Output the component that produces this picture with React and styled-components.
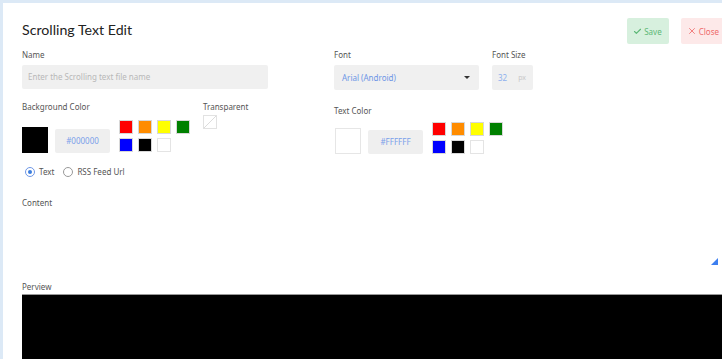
import styled, { createGlobalStyle } from "styled-components";
import { Check, X } from "lucide-react";

const GlobalStyle = createGlobalStyle`
  html, body {
    margin: 0;
    padding: 0;
    background: #fff;
    font-family: "Noto Sans", "Open Sans", sans-serif;
    color: #333;
  }
`;

const Page = styled.div`
  width: 719px;
  height: 356px;
  overflow: hidden;
  border-top: 3px solid #dce9f6;
  border-left: 3px solid #dce9f6;
  padding: 0 0 0 19px;
  box-sizing: content-box;
`;

const Header = styled.div`
  display: flex;
  justify-content: space-between;
  align-items: flex-start;
  height: 46px;
  margin-right: 15px;
`;

const Title = styled.h1`
  margin: 17px 0 0;
  font-family: "Lato", "Noto Sans", sans-serif;
  font-size: 14.2px;
  font-weight: 400;
  line-height: 20px;
  color: #222;
`;

const Actions = styled.div`
  display: flex;
  gap: 12px;
  margin-top: 15px;
`;

const ActionButton = styled.button`
  display: flex;
  align-items: center;
  gap: 2px;
  height: 26px;
  padding: 0 7px 0 6px;
  border: none;
  border-radius: 2px;
  font-family: inherit;
  font-size: 8px;
  background: ${(p) => (p.$kind === "save" ? "#d7f0de" : "#fde9e9")};
  color: ${(p) => (p.$kind === "save" ? "#5cb876" : "#ef6b6b")};
`;

const Grid = styled.div`
  display: grid;
  grid-template-columns: 312px 1fr;
`;

const Column = styled.div`
  display: flex;
  flex-direction: column;
`;

const Label = styled.div`
  font-size: 8px;
  line-height: 12px;
  color: #555;
  margin-top: ${(p) => p.$mt ?? 0}px;
  margin-bottom: ${(p) => p.$mb ?? 4}px;
`;

const TextInput = styled.div`
  width: 246px;
  height: 24px;
  background: #f0f0f0;
  border-radius: 2px;
  font-size: 8px;
  line-height: 24px;
  padding-left: 6px;
  box-sizing: border-box;
  color: #b8b8b8;
`;

const FontRow = styled.div`
  display: flex;
  gap: 13px;
`;

const Field = styled.div`
  display: flex;
  flex-direction: column;
`;

const Select = styled.div`
  position: relative;
  width: 145px;
  height: 25px;
  background: #f0f0f0;
  border-radius: 2px;
  font-size: 8px;
  line-height: 25px;
  padding-left: 8px;
  box-sizing: border-box;
  color: #6d96e6;
  &::after {
    content: "";
    position: absolute;
    right: 9px;
    top: 11px;
    border-left: 3px solid transparent;
    border-right: 3px solid transparent;
    border-top: 3px solid #333;
  }
`;

const SizeInput = styled.div`
  display: flex;
  align-items: center;
  gap: 11px;
  width: 41px;
  height: 25px;
  background: #f0f0f0;
  border-radius: 2px;
  font-size: 8px;
  padding-left: 6px;
  box-sizing: border-box;
  color: #8fb0ee;
`;

const Unit = styled.span`
  color: #c8c8c8;
  font-size: 7px;
`;

const ColorRow = styled.div`
  display: flex;
  align-items: flex-end;
  margin-top: ${(p) => p.$mt}px;
`;

const BigSwatch = styled.div`
  width: 26px;
  height: 26px;
  background: ${(p) => p.$color};
  border: 1px solid ${(p) => (p.$color === "#ffffff" ? "#e6e6e6" : p.$color)};
  box-sizing: border-box;
  margin: 0 7px ${(p) => p.$mb}px ${(p) => p.$ml}px;
`;

const HexInput = styled.div`
  width: 55px;
  height: 24px;
  background: #efefef;
  border-radius: 2px;
  font-size: 8px;
  line-height: 24px;
  text-align: center;
  color: #7aa0ea;
  margin: 0 9px ${(p) => p.$mb}px 0;
`;

const Palette = styled.div`
  display: grid;
  grid-template-columns: repeat(4, 14px);
  grid-auto-rows: 14px;
  gap: 4px 5px;
`;

const Chip = styled.div`
  background: ${(p) => p.$color};
  border: 1px solid ${(p) => (p.$color === "#ffffff" ? "#e4e4e4" : "#d8d8d8")};
  box-sizing: border-box;
`;

const Transparent = styled.div`
  display: flex;
  flex-direction: column;
  margin-left: 13px;
  align-self: flex-start;
  margin-top: -19px;
`;

const NoneBox = styled.svg`
  display: block;
  margin-top: 2px;
`;

const RadioRow = styled.div`
  display: flex;
  align-items: center;
  gap: 9px;
  margin: 14px 0 0 3px;
  font-size: 8px;
  color: #555;
`;

const RadioOption = styled.label`
  display: flex;
  align-items: center;
  gap: 4px;
`;

const RadioDot = styled.span`
  width: 10px;
  height: 10px;
  border-radius: 50%;
  border: 1px solid ${(p) => (p.$on ? "#6d96e6" : "#999")};
  box-sizing: border-box;
  display: flex;
  align-items: center;
  justify-content: center;
  &::after {
    content: "";
    width: 4px;
    height: 4px;
    border-radius: 50%;
    background: ${(p) => (p.$on ? "#3b7ddd" : "transparent")};
  }
`;

const ContentArea = styled.div`
  position: relative;
  height: 62px;
  margin-top: 10px;
`;

const Corner = styled.div`
  position: absolute;
  right: 23px;
  bottom: 16px;
  width: 0;
  height: 0;
  border-left: 7px solid transparent;
  border-bottom: 7px solid #3d7ff0;
`;

const Preview = styled.div`
  height: 70px;
  background: #000;
  border-top: 1px solid #999;
`;

const swatches = [
  "#ff0000",
  "#ff8c00",
  "#ffff00",
  "#008000",
  "#0000ff",
  "#000000",
  "#ffffff",
];

function ColorPicker({ value, swatch, mb, ml }) {
  return (
    <>
      <BigSwatch $color={swatch} $mb={mb} $ml={ml} />
      <HexInput $mb={mb}>{value}</HexInput>
      <Palette>
        {swatches.map((c) => (
          <Chip key={c} $color={c} />
        ))}
      </Palette>
    </>
  );
}

export default function App() {
  return (
    <>
      <GlobalStyle />
      <Page>
        <Header>
          <Title>Scrolling Text Edit</Title>
          <Actions>
            <ActionButton $kind="save">
              <Check size={9} strokeWidth={3} /> Save
            </ActionButton>
            <ActionButton $kind="close">
              <X size={10} strokeWidth={2} /> Close
            </ActionButton>
          </Actions>
        </Header>
        <Grid>
          <Column>
            <Label>Name</Label>
            <TextInput>Enter the Scrolling text file name</TextInput>
            <Label $mt={12} $mb={0}>
              Background Color
            </Label>
            <ColorRow $mt={7}>
              <ColorPicker value="#000000" swatch="#000000" mb={-1} ml={0} />
              <Transparent>
                <Label $mb={0}>Transparent</Label>
                <NoneBox width="14" height="14" viewBox="0 0 14 14">
                  <rect x="0.5" y="0.5" width="13" height="13" fill="#fff" stroke="#e2e2e2" />
                  <line x1="1" y1="13" x2="13" y2="1" stroke="#dcdcdc" />
                </NoneBox>
              </Transparent>
            </ColorRow>
            <RadioRow>
              <RadioOption>
                <RadioDot $on />
                Text
              </RadioOption>
              <RadioOption>
                <RadioDot />
                RSS Feed Url
              </RadioOption>
            </RadioRow>
          </Column>
          <Column>
            <FontRow>
              <Field>
                <Label>Font</Label>
                <Select>Arial (Android)</Select>
              </Field>
              <Field>
                <Label>Font Size</Label>
                <SizeInput>
                  32 <Unit>px</Unit>
                </SizeInput>
              </Field>
            </FontRow>
            <Label $mt={15} $mb={0}>
              Text Color
            </Label>
            <ColorRow $mt={5}>
              <ColorPicker value="#FFFFFF" swatch="#ffffff" mb={0} ml={1} />
            </ColorRow>
          </Column>
        </Grid>
        <Label $mt={20} $mb={0}>
          Content
        </Label>
        <ContentArea>
          <Corner />
        </ContentArea>
        <Label $mb={1}>Perview</Label>
        <Preview />
      </Page>
    </>
  );
}
